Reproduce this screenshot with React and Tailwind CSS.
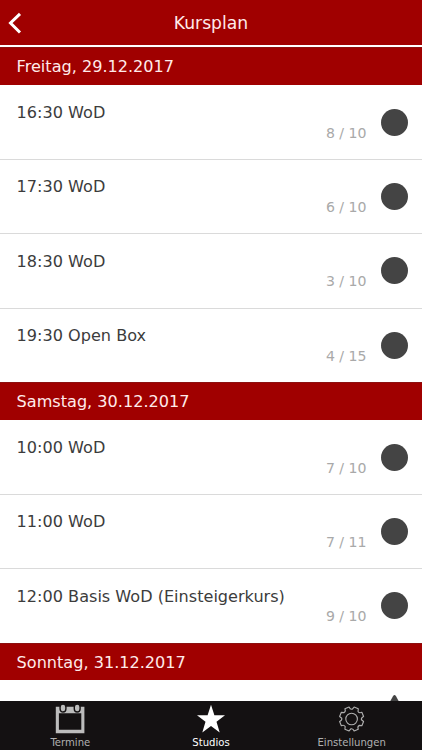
const days = [
  {
    title: 'Freitag, 29.12.2017',
    courses: [
      ['16:30 WoD', '8 / 10'],
      ['17:30 WoD', '6 / 10'],
      ['18:30 WoD', '3 / 10'],
      ['19:30 Open Box', '4 / 15'],
    ],
  },
  {
    title: 'Samstag, 30.12.2017',
    courses: [
      ['10:00 WoD', '7 / 10'],
      ['11:00 WoD', '7 / 11'],
      ['12:00 Basis WoD (Einsteigerkurs)', '9 / 10'],
    ],
  },
  { title: 'Sonntag, 31.12.2017', courses: [] },
];

function Course({ name, places, first }) {
  return (
    <li className={`flex h-[74.4px] items-start border-t pl-[16.6px] pr-[14.5px] ${first ? 'border-transparent' : 'border-[#dadada]'}`}>
      <span className="mt-[15.3px] flex-1 whitespace-nowrap text-[16.1px] leading-[24px] text-[#3c3c3c]">{name}</span>
      <span className="mt-[36.9px] text-[14.1px] leading-[20px] text-[#a9a9a9]">{places}</span>
      <span className="ml-[14px] mt-[22.9px] size-[27px] rounded-full bg-[#444]" />
    </li>
  );
}

function CalendarIcon() {
  return (
    <svg width="30" height="30" viewBox="0 0 30 30">
      <path fillRule="evenodd" fill="#bcbcbc" d="M.8 2.7H29.4V29.2H.8ZM3.9 9.3V25.8H26.3V9.3Z" />
      <rect x="5.1" y="0" width="5.8" height="8" rx="2.9" fill="#bcbcbc" stroke="#141112" strokeWidth="1.4" />
      <rect x="19.3" y="0" width="5.8" height="8" rx="2.9" fill="#bcbcbc" stroke="#141112" strokeWidth="1.4" />
    </svg>
  );
}

function StarIcon() {
  return (
    <svg width="30" height="30" viewBox="0 0 30 30">
      <path fill="#fff" d="M15 .8 18.4 11.2H29L20.5 17.7 23.7 28.4 15 22 6.3 28.4 9.5 17.7 1 11.2H11.6Z" />
    </svg>
  );
}

function GearIcon() {
  return (
    <svg width="30" height="30" viewBox="0 0 30 30" fill="none" stroke="#b0b0b0" strokeWidth="1.1" strokeLinejoin="round">
      <circle cx="14.6" cy="15" r="5.8" />
      <g transform="translate(14.6 15) rotate(22.5) scale(1.02)">
        <path d="M-2.2-11.8H2.2L3-9.2Q4.8-7.9 6.8-9.9L9.9-6.8Q7.9-4.8 9.2-3L11.8-2.2V2.2L9.2 3Q7.9 4.8 9.9 6.8L6.8 9.9Q4.8 7.9 3 9.2L2.2 11.8H-2.2L-3 9.2Q-4.8 7.9-6.8 9.9L-9.9 6.8Q-7.9 4.8-9.2 3L-11.8 2.2V-2.2L-9.2-3Q-7.9-4.8-9.9-6.8L-6.8-9.9Q-4.8-7.9-3-9.2Z" />
      </g>
    </svg>
  );
}

function Tab({ icon, label, active }) {
  return (
    <div className={`flex flex-1 flex-col items-center pt-[3.5px] text-[10.1px] leading-[14px] ${active ? 'text-white' : 'text-[#b0b0b0]'}`}>
      {icon}
      <span className="mt-[1.5px]">{label}</span>
    </div>
  );
}

export default function App() {
  return (
    <div className="flex h-[750px] w-[422px] flex-col overflow-hidden bg-white font-['DejaVu_Sans',sans-serif]">
      <header className="grid h-[45px] shrink-0 grid-cols-[40px_1fr_40px] items-center bg-[#a00000]">
        <svg className="ml-[8px]" width="14" height="22" viewBox="0 0 14 22" fill="none" stroke="#fff" strokeWidth="3">
          <path d="M12 1.8 2.5 11 12 20.5" />
        </svg>
        <h1 className="text-center text-[17.2px] leading-[24px] text-[#ffeaea]">Kursplan</h1>
      </header>
      <main className="min-h-0 flex-1 overflow-hidden pt-[2.3px]">
        {days.map((day) => (
          <section key={day.title}>
            <h2 className="flex h-[37.4px] items-center border-t border-[#8c1010] bg-[#a00000] pl-[16.6px] pt-[1.6px] text-[16.1px] text-[#ffeaea]">{day.title}</h2>
            <ul>
              {day.courses.map(([name, places], i) => (
                <Course key={name} name={name} places={places} first={i === 0} />
              ))}
            </ul>
          </section>
        ))}
        <div className="flex justify-end pr-[14.5px] pt-[14.5px]">
          <svg width="27" height="24" viewBox="0 0 27 24">
            <path fill="#444" d="M13.5 0Q14.3 0 15 1.2L27 23H0L12 1.2Q12.7 0 13.5 0Z" />
          </svg>
        </div>
      </main>
      <nav className="flex h-[49.5px] shrink-0 bg-[#141112]">
        <Tab icon={<CalendarIcon />} label="Termine" />
        <Tab icon={<StarIcon />} label="Studios" active />
        <Tab icon={<GearIcon />} label="Einstellungen" />
      </nav>
    </div>
  );
}
